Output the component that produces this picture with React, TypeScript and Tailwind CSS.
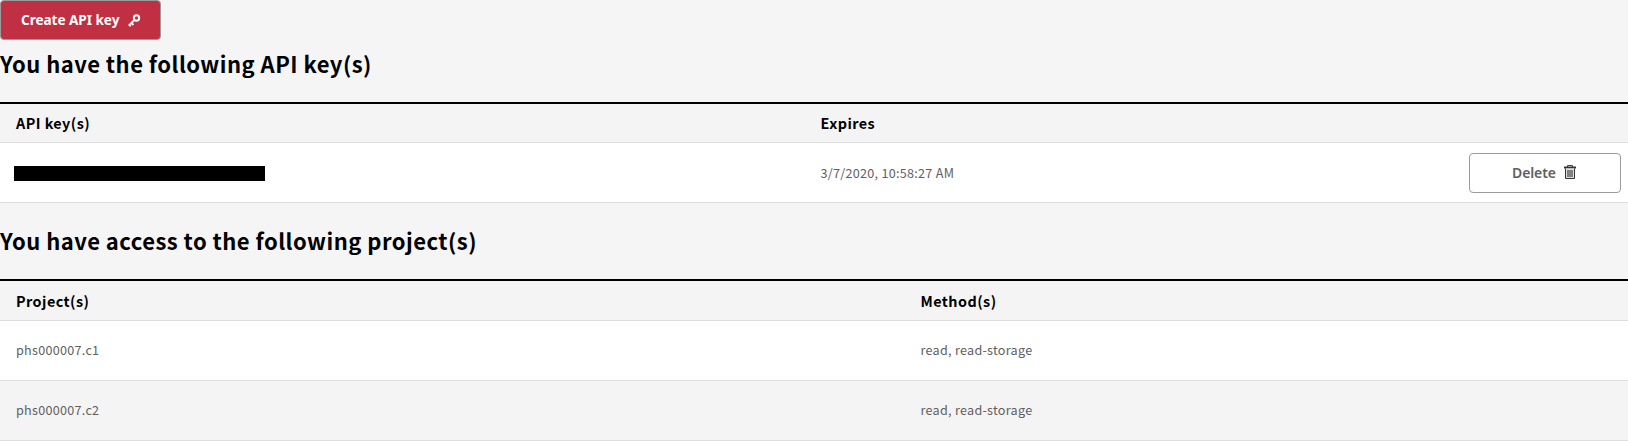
import type { ReactNode } from "react";

const sans = "font-['Noto_Sans_CJK_SC',sans-serif]";

function KeyIcon() {
  return (
    <svg width="13" height="13" viewBox="0 0 13 13" fill="none" stroke="currentColor">
      <circle cx="8.5" cy="4" r="2.7" strokeWidth="2" />
      <path d="M6.7 5.8.7 11.6M3.4 8.9l2 2.1M1 10.6l1.7 1.6" strokeWidth="1.9" />
    </svg>
  );
}

function TrashIcon() {
  return (
    <svg className="mb-[2px]" width="12" height="14" viewBox="0 0 12 14" fill="none">
      <path d="M3.5 2V.5h5V2" stroke="#444" />
      <path d="M0 1.5h12v2H0z" fill="#333" />
      <path d="M1.5 3.5v10h9v-10" fill="#ddd" stroke="#333" />
      <path d="M3 5h6v7H3z" fill="#808080" />
    </svg>
  );
}

function Heading({ children }: { children: ReactNode }) {
  return (
    <h2 className={`${sans} h-[26px] whitespace-nowrap text-[22px] font-bold leading-[25px] tracking-[0.47px] text-black`}>
      {children}
    </h2>
  );
}

function Th({ children }: { children?: ReactNode }) {
  return <div className="text-[14.4px] font-bold leading-[20px] tracking-[0.45px] text-black">{children}</div>;
}

const projects = [
  { id: "phs000007.c1", methods: "read, read-storage", bg: "bg-white" },
  { id: "phs000007.c2", methods: "read, read-storage", bg: "bg-[#f4f4f4]" },
];

export default function App() {
  return (
    <div className={`${sans} h-[443px] w-full overflow-hidden bg-[#f5f5f5] text-[12.6px] tracking-[0.28px] text-[#606060]`}>
      <button className="flex h-[40px] w-[161px] items-center rounded-[4px] border border-[#9b9b9b] bg-[#c02f42] pl-[20px] pt-px font-['Noto_Sans',sans-serif] text-[13.6px] font-bold tracking-[-0.05px] text-white">
        <span className="w-[107px] whitespace-nowrap text-left">Create API key</span>
        <KeyIcon />
      </button>
      <div className="pt-[11px]">
        <Heading>You have the following API key(s)</Heading>
      </div>

      <section className="mt-[25px] border-t-2 border-black">
        <div className="grid h-[39px] grid-cols-[804.5px_1fr] items-center border-b border-[#dedede] bg-[#f4f4f4] pl-[16px]">
          <Th>API key(s)</Th>
          <Th>Expires</Th>
        </div>
        <div className="grid h-[60px] grid-cols-[806.5px_1fr_152px] items-center border-b border-[#dedede] bg-white pl-[14px] pr-[7px] pt-px">
          <div className="h-[15px] w-[251px] bg-black" />
          <div className="pt-px">3/7/2020, 10:58:27 AM</div>
          <button className="flex h-[40px] items-center rounded-[4px] border border-[#9b9b9b] bg-white pl-[42px] font-['Noto_Sans',sans-serif] text-[14px] font-semibold tracking-[-0.1px]">
            <span className="w-[52px] pb-[2px] text-left">Delete</span>
            <TrashIcon />
          </button>
        </div>
      </section>

      <div className="pt-[25px]">
        <Heading>You have access to the following project(s)</Heading>
      </div>

      <section className="mt-[25px] border-t-2 border-black bg-white">
        <div className="grid h-[40px] grid-cols-[904.5px_1fr] items-center border-b border-[#dedede] bg-[#f4f4f4] pl-[16px]">
          <Th>Project(s)</Th>
          <Th>Method(s)</Th>
        </div>
        {projects.map((p) => (
          <div key={p.id} className={`${p.bg} grid h-[60px] grid-cols-[904.5px_1fr] items-center border-b border-[#dedede] pl-[16px]`}>
            <div>{p.id}</div>
            <div>{p.methods}</div>
          </div>
        ))}
        <div className="h-[2px] bg-white" />
      </section>
    </div>
  );
}
